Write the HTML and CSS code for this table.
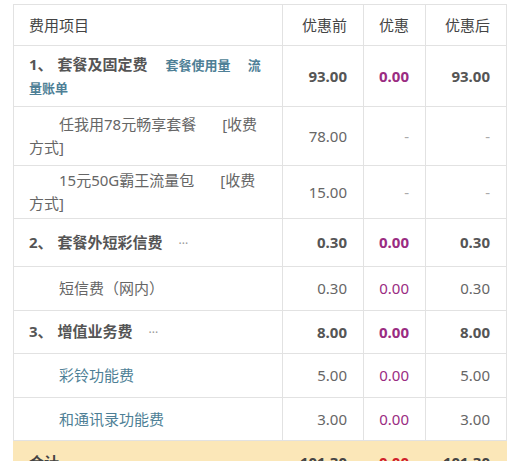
FILE: index.html
```html
<!DOCTYPE html>
<html lang="zh-CN">
<head>
<meta charset="utf-8">
<link rel="stylesheet" href="styles.css">
</head>
<body>
<div class="frame">
<table class="bill">
  <colgroup>
    <col class="c-name"><col class="c-num"><col class="c-disc"><col class="c-num">
  </colgroup>
  <thead>
    <tr class="h41">
      <th class="name">费用项目</th>
      <th>优惠前</th>
      <th>优惠</th>
      <th>优惠后</th>
    </tr>
  </thead>
  <tbody>
    <tr class="group h61">
      <td class="name first"><span class="idx">1、</span>套餐及固定费<a class="link gap">套餐使用量</a><a class="link gap2">流量账单</a></td>
      <td>93.00</td><td class="disc">0.00</td><td>93.00</td>
    </tr>
    <tr class="item h59">
      <td class="name sub">任我用78元畅享套餐<span class="way">[收费方式]</span></td>
      <td>78.00</td><td class="dash">-</td><td class="dash">-</td>
    </tr>
    <tr class="item h53">
      <td class="name sub">15元50G霸王流量包<span class="way">[收费方式]</span></td>
      <td>15.00</td><td class="dash">-</td><td class="dash">-</td>
    </tr>
    <tr class="group h48">
      <td class="name"><span class="idx">2、</span>套餐外短彩信费<span class="more">···</span></td>
      <td>0.30</td><td class="disc">0.00</td><td>0.30</td>
    </tr>
    <tr class="item h44">
      <td class="name sub">短信费（网内）</td>
      <td>0.30</td><td class="disc">0.00</td><td>0.30</td>
    </tr>
    <tr class="group h43">
      <td class="name"><span class="idx">3、</span>增值业务费<span class="more">···</span></td>
      <td>8.00</td><td class="disc">0.00</td><td>8.00</td>
    </tr>
    <tr class="item h44">
      <td class="name sub"><a class="link">彩铃功能费</a></td>
      <td>5.00</td><td class="disc">0.00</td><td>5.00</td>
    </tr>
    <tr class="item h43">
      <td class="name sub"><a class="link">和通讯录功能费</a></td>
      <td>3.00</td><td class="disc">0.00</td><td>3.00</td>
    </tr>
    <tr class="total h44">
      <td class="name">合计</td>
      <td>101.30</td><td class="red">0.00</td><td>101.30</td>
    </tr>
  </tbody>
</table>
</div>
</body>
</html>
```
FILE: styles.css
```css
html, body {
  margin: 0;
  padding: 0;
  background: #fff;
  width: 511px;
  height: 461px;
  overflow: hidden;
}
body {
  font-family: "Noto Sans", "Noto Sans CJK SC", sans-serif;
  font-size: 15px;
  color: #666;
}
.frame {
  padding: 4px 0 0 13px;
}
.bill {
  border-collapse: collapse;
  table-layout: fixed;
  width: 493px;
}
.c-name { width: 269px; }
.c-num { width: 81px; }
.c-disc { width: 62px; }
.bill th, .bill td {
  border: 1px solid #e2e2e2;
  padding: 0 16px 0 15px;
  text-align: right;
  vertical-align: middle;
  line-height: 23px;
}
.bill th {
  font-weight: normal;
  color: #444;
}
.bill .name {
  text-align: left;
}
.bill .first {
  padding-right: 12px;
  line-height: 22px;
}
.h41 { height: 41px; }
.h61 { height: 61px; }
.h59 { height: 59px; }
.h53 { height: 53px; }
.h48 { height: 48px; }
.h44 { height: 44px; }
.h43 { height: 43px; }
.group td {
  font-weight: bold;
  color: #555;
}
.idx {
  margin-right: 5px;
}
.link {
  font-size: 13px;
  color: #4e7f96;
  font-weight: bold;
}
.gap { margin-left: 18px; }
.gap2 { margin-left: 17px; }
.item td { color: #666; }
.sub { text-indent: 30px; }
.way { margin-left: 26px; }
.item .link { font-weight: normal; font-size: 15px; color: #4e7f96; }
.more {
  margin-left: 16px;
  color: #999;
  font-weight: normal;
  font-size: 12px;
}
.bill td.disc { color: #9a2c82; }
.bill td.dash { color: #aaa; }
.total td {
  background: #fbe7b8;
  border-color: #fbe7b8;
  color: #444;
  font-weight: bold;
}
.bill td.red { color: #d0202a; }
```
